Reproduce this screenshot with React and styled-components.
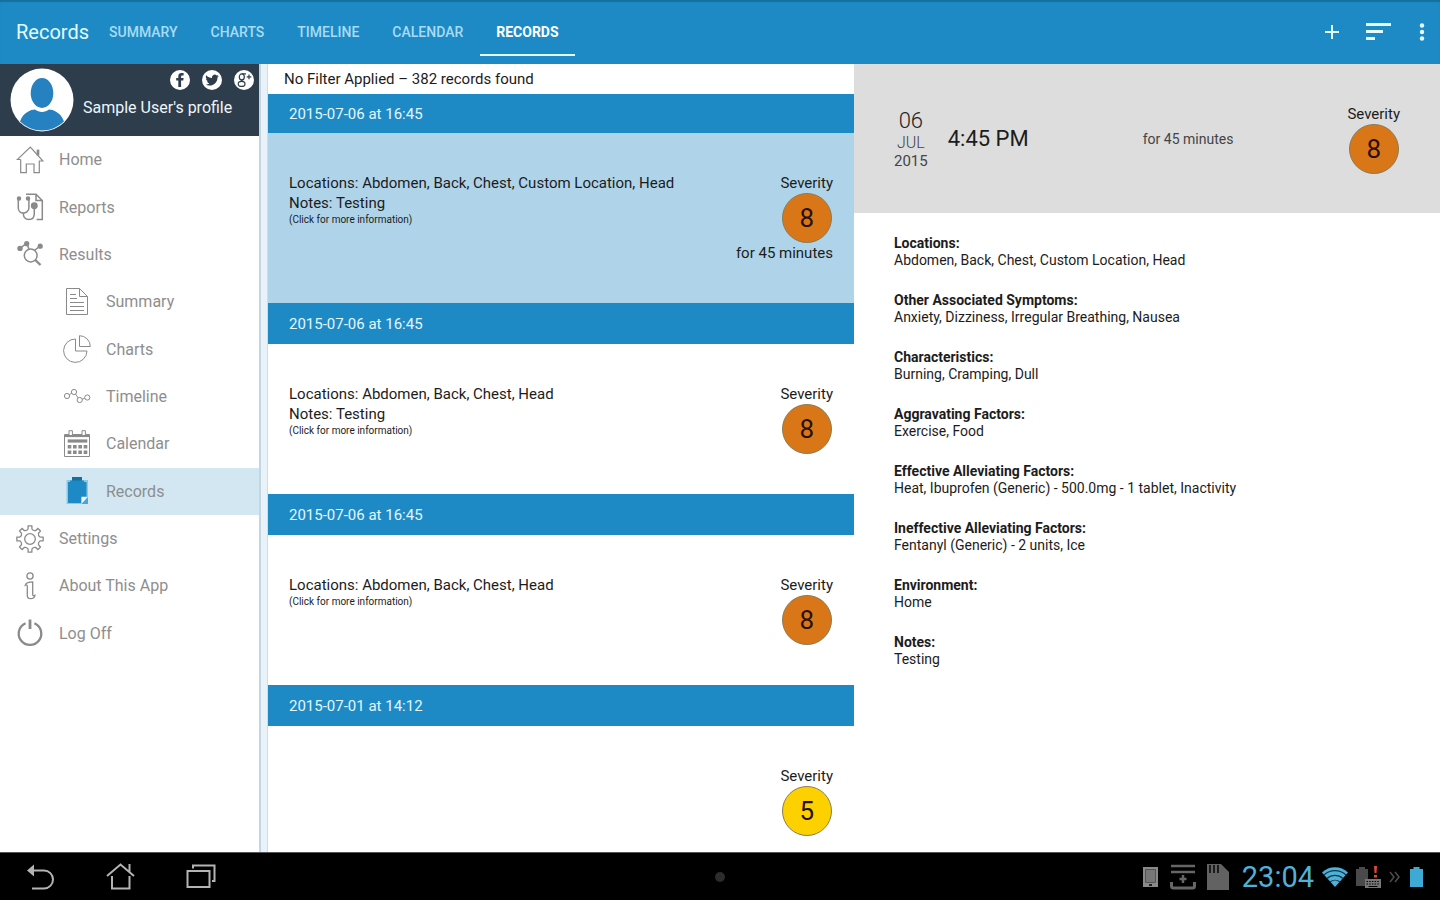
import React from "react";
import styled, { createGlobalStyle } from "styled-components";

const GlobalStyle = createGlobalStyle`
  * {
    box-sizing: border-box;
  }
  body {
    margin: 0;
    background: #fff;
    color: #1c1c1c;
    font-family: Roboto, "Liberation Sans", sans-serif;
    font-size: 15px;
  }
  button {
    margin: 0;
    padding: 0;
    border: 0;
    background: none;
    color: inherit;
    font: inherit;
    cursor: pointer;
  }
  a {
    color: inherit;
    text-decoration: none;
  }
  svg {
    display: block;
    flex: none;
  }
`;

const Screen = styled.div`
  display: grid;
  grid-template-rows: 64px minmax(0, 1fr) 48px;
  height: 100vh;
`;

/* Top bar */

const TopBar = styled.header`
  display: flex;
  align-items: center;
  padding: 0 15px 0 16px;
  background: #1e8ac5;
  box-shadow: inset 0 2px 1px #16709f;
  color: #e4fbff;
`;

const AppTitle = styled.h1`
  margin: 0;
  width: 77px;
  font-size: 20px;
  font-weight: 400;
`;

const Tabs = styled.nav`
  display: flex;
  flex: 1;
  gap: 1px;
`;

const Tab = styled.a`
  padding: 0 16px;
  height: 48px;
  line-height: 48px;
  font-size: 14px;
  font-weight: ${(p) => (p.$active ? 700 : 500)};
  color: ${(p) => (p.$active ? "#fff" : "#a9dcf3")};
  border-bottom: 2px solid ${(p) => (p.$active ? "#e4fbff" : "transparent")};
`;

const Actions = styled.div`
  display: flex;
  align-items: center;
  gap: 27px;
`;

/* Columns */

const Columns = styled.div`
  display: grid;
  grid-template-columns: 259px 9px minmax(0, 1fr) minmax(0, 1fr);
`;

const Sidebar = styled.aside`
  min-height: 0;
  overflow: hidden;
`;

const Divider = styled.div`
  background: #e9f2f8;
  border-left: 2px solid #c3d7e3;
  border-right: 1px solid #cfdde6;
`;

const Profile = styled.div`
  display: flex;
  gap: 9px;
  height: 72px;
  padding: 4px 5px 4px 10px;
  background: #2d3d4c;
  color: #eef5f8;
`;

const ProfileBody = styled.div`
  flex: 1;
  padding-top: 2px;
`;

const Social = styled.div`
  display: flex;
  justify-content: flex-end;
  gap: 12px;
`;

const ProfileName = styled.div`
  padding-top: 7px;
  font-size: 16px;
  line-height: 22px;
  white-space: nowrap;
`;

const Menu = styled.nav`
  display: flex;
  flex-direction: column;
  height: 521px;
`;

const MenuItem = styled.a`
  display: flex;
  flex: 1;
  align-items: center;
  gap: 15px;
  padding-left: ${(p) => (p.$nested ? "63px" : "16px")};
  background: ${(p) => (p.$active ? "#d2e7f2" : "transparent")};
  color: #8e8e8e;
  font-size: 16px;
`;

/* Record list */

const List = styled.main`
  min-height: 0;
  overflow: hidden;
`;

const FilterInfo = styled.div`
  height: 30px;
  padding-left: 16px;
  line-height: 30px;
`;

const RecordItem = styled.article`
  &:first-of-type > h2 {
    height: 39px;
    line-height: 40px;
  }
`;

const RecordDate = styled.h2`
  margin: 0;
  height: 41px;
  padding-left: 21px;
  line-height: 43px;
  background: #1e8ac5;
  color: #e4f6ff;
  font-size: 15px;
  font-weight: 400;
`;

const RecordBody = styled.div`
  display: flex;
  justify-content: space-between;
  padding: 40px 21px;
  background: ${(p) => (p.$selected ? "#afd4e9" : "#fff")};
  line-height: 20px;
`;

const Hint = styled.div`
  font-size: 10px;
  line-height: 13px;
`;

const RecordSide = styled.div`
  display: flex;
  flex-direction: column;
  align-items: flex-end;
`;

const SeverityBox = styled.div`
  display: flex;
  flex-direction: column;
  align-items: center;
  line-height: 20px;
`;

const Score = styled.div`
  width: 50px;
  height: 50px;
  border: 1px solid #8a7b57;
  border-radius: 50%;
  background: ${(p) => (p.$level > 6 ? "#d97718" : "#fdd000")};
  color: #2a0f06;
  font-size: 26px;
  line-height: 49px;
  text-align: center;
`;

/* Record detail */

const Detail = styled.section`
  min-height: 0;
  overflow: hidden;
`;

const DetailHead = styled.div`
  display: flex;
  align-items: center;
  height: 149px;
  padding: 0 40px;
  background: #dddddd;
`;

const DateBlock = styled.div`
  margin-right: 20px;
  color: #444;
  font-size: 15px;
  line-height: 18px;
  text-align: center;
`;

const Day = styled.div`
  color: #222;
  font-size: 22px;
  font-weight: 300;
  line-height: 26px;
`;

const Month = styled.div`
  font-size: 16px;
  font-weight: 300;
`;

const Time = styled.div`
  font-size: 22px;
`;

const Duration = styled.div`
  margin: 0 auto;
  color: #444;
  font-size: 14px;
`;

const Fields = styled.dl`
  display: flex;
  flex-direction: column;
  gap: 23px;
  margin: 0;
  padding: 22px 40px;
  font-size: 14px;
  line-height: 17px;

  dt {
    font-weight: 700;
  }
  dd {
    margin: 0;
  }
`;

/* System bar */

const SystemBar = styled.footer`
  display: grid;
  grid-template-columns: 1fr auto 1fr;
  align-items: center;
  padding: 0 16px;
  background: #000;
  border-top: 1px solid #555;
`;

const SystemKeys = styled.div`
  display: flex;
  gap: 50px;
  padding-left: 10px;
`;

const Dot = styled.div`
  width: 10px;
  height: 10px;
  border-radius: 50%;
  background: #2c2c2c;
`;

const Status = styled.div`
  display: flex;
  align-items: center;
  justify-content: flex-end;
  gap: 8px;
`;

const StatusIcons = styled.div`
  display: flex;
  align-items: center;
  gap: 10px;
  margin-right: 4px;
`;

const Clock = styled.time`
  color: #4fb0d8;
  font-size: 29px;
  line-height: 48px;
`;

/* Icons */

const MenuIcon = ({ children, width = 1.2 }) => (
  <svg
    width="28"
    height="28"
    viewBox="0 0 28 28"
    fill="none"
    stroke="#8a8a8a"
    strokeWidth={width}
    aria-hidden="true"
  >
    {children}
  </svg>
);

const polar = (r, deg) => {
  const a = (deg * Math.PI) / 180;
  return `${(14 + r * Math.cos(a)).toFixed(2)} ${(14 + r * Math.sin(a)).toFixed(2)}`;
};

// eight teeth with rounded valleys between them
const gearPath =
  [0, 45, 90, 135, 180, 225, 270, 315]
    .map(
      (a, i) =>
        `${i ? "L" : "M"}${polar(10.2, a - 11)} L${polar(13.2, a - 8)} A13.2 13.2 0 0 1 ${polar(13.2, a + 8)} L${polar(10.2, a + 11)} Q${polar(8.6, a + 22.5)} ${polar(10.2, a + 34)}`
    )
    .join(" ") + "Z";

const icons = {
  home: (
    <MenuIcon>
      <path d="M4.7 13.5H1.3L14.3 1 27 15H23.3V26.7H18V18H10.3V26.7H4.7V13.5" />
      <path d="M22 9.5V3.6" strokeWidth="2.6" />
    </MenuIcon>
  ),
  reports: (
    <MenuIcon width={1.5}>
      <path d="M10 1.2H20l6.3 6.3v19H20.6M20 1.2v6.3h6.3" />
      <path d="M2.3 6v9c0 3 2.3 5 5 5s5.6-2 5.6-5V6" />
      <path d="M7.3 20c0 4.5 2.5 6.5 5.5 6.5s5.5-2 5.5-6v-6" />
      <circle cx="18.3" cy="12.8" r="2.7" fill="#8a8a8a" />
      <circle cx="3" cy="5.6" r="1.5" fill="#8a8a8a" />
      <circle cx="12" cy="5.6" r="1.5" fill="#8a8a8a" />
    </MenuIcon>
  ),
  results: (
    <MenuIcon width={1.5}>
      <circle cx="14.7" cy="15.5" r="6.4" />
      <path d="M4 8.2l6.7-4.7 2.4 5.8M24 6.2l-5.6 4.3" />
      <path d="M19.3 20l5.2 5" strokeWidth="2.4" />
      <g fill="#8a8a8a" stroke="none">
        <circle cx="4" cy="8.4" r="2.7" />
        <circle cx="10.7" cy="3.7" r="2.6" />
        <circle cx="24.2" cy="6.2" r="2.6" />
      </g>
    </MenuIcon>
  ),
  summary: (
    <MenuIcon width={1}>
      <path d="M3.5 .5H16.5L24.5 8.5V26.5H3.5ZM16.5 .5v8h8" />
      <path d="M7 6.5h6M7 10.5h7M7 14.5h14M7 18.5h14M7 22.5h14" />
    </MenuIcon>
  ),
  charts: (
    <MenuIcon width={1}>
      <path d="M12.5 4A11.7 11.7 0 1 0 24 16H12.5Z" />
      <path d="M16.5 .7V11.5H27.3A10.8 10.8 0 0 0 16.5 .7Z" />
    </MenuIcon>
  ),
  timeline: (
    <MenuIcon width={1}>
      <circle cx="4" cy="14" r="2.6" />
      <circle cx="11" cy="10" r="2.6" />
      <circle cx="16.7" cy="18" r="2.6" />
      <circle cx="24.3" cy="15.5" r="2.6" />
      <path d="M6.3 12.7l2.4-1.4M12.5 12.1l2.7 3.8M19.2 17.1l2.6-.8" />
    </MenuIcon>
  ),
  calendar: (
    <MenuIcon width={1}>
      <path d="M1.5 4.5h25v22h-25Z" />
      <path d="M2 5.8H26" strokeWidth="2.6" />
      <path d="M6 5V.7h3.4V5M19 5V.7h3.4V5" fill="#fff" />
      <path d="M4.7 11H24.3" strokeWidth="3.2" />
      <path d="M4.7 16.7H24.3M4.7 22.2H24.3" strokeWidth="3.4" strokeDasharray="3.6 1.73" />
    </MenuIcon>
  ),
  records: (
    <MenuIcon>
      <g stroke="none">
        <path d="M3.5 3h21.5v24H3.5Z" fill="#8fc6e2" />
        <path d="M5 5h18.5v14.5h-5V26H5Z" fill="#1e8ac5" />
        <path d="M9 0h10v5.2H9Z" fill="#176f9f" />
        <path d="M7 3.5h14v2.8H7Z" fill="#1e8ac5" />
        <path d="M18.5 20H25L18.5 27Z" fill="#e6f5fb" />
        <path d="M25 20v7h-6.5Z" fill="#4ba4d2" />
      </g>
    </MenuIcon>
  ),
  settings: (
    <MenuIcon width={1.3}>
      <path d={gearPath} />
      <circle cx="14" cy="14" r="5.3" />
    </MenuIcon>
  ),
  about: (
    <MenuIcon width={1.3}>
      <circle cx="14" cy="4" r="3.1" />
      <path d="M9.3 13.2C10 10.8 12 9.9 16.7 9.9V22.5c0 1.6 1 1.6 2.2.8-.2 2-2 3.4-4.2 3.4-2.4 0-3.4-1.2-3.4-3.2v-9c0-1.6-.9-1.9-2-1.3Z" />
    </MenuIcon>
  ),
  logoff: (
    <MenuIcon width={2.3}>
      <path d="M9.6 4.2A11.3 11.3 0 1 0 18.4 4.2" />
      <path d="M14 .5V10" strokeWidth="2.8" />
    </MenuIcon>
  ),
};

const Avatar = () => (
  <svg width="64" height="64" viewBox="0 0 64 64" role="img" aria-label="Avatar">
    <circle cx="32" cy="32" r="31.5" fill="#fff" />
    <ellipse cx="32" cy="25" rx="11.3" ry="15" fill="#2581bf" />
    <path d="M10 53.5C13 44.5 21 41.5 25 41.5c4 3.3 10 3.3 14 0 4 0 12 3 15 12A31.5 31.5 0 0 1 10 53.5Z" fill="#2581bf" />
  </svg>
);

const Facebook = () => (
  <svg width="20" height="20" viewBox="0 0 20 20" aria-hidden="true">
    <circle cx="10" cy="10" r="10" fill="#fff" />
    <path d="M8.3 17V10.6H6.2V8h2.1V6.2C8.3 4 9.6 2.9 11.6 2.9h2v2.5h-1.4c-.9 0-1.1.4-1.1 1.1V8h2.5l-.3 2.6h-2.2V17Z" fill="#2d3d4c" />
  </svg>
);

const Twitter = () => (
  <svg width="20" height="20" viewBox="0 0 20 20" aria-hidden="true">
    <circle cx="10" cy="10" r="10" fill="#fff" />
    <g transform="translate(3.4 3.4) scale(.56)">
      <path
        d="M23.95 4.57a10 10 0 0 1-2.82.77 4.96 4.96 0 0 0 2.16-2.72c-.95.55-2 .95-3.13 1.18a4.92 4.92 0 0 0-8.38 4.48C7.69 8.1 4.07 6.13 1.64 3.16a4.82 4.82 0 0 0 1.52 6.57 4.9 4.9 0 0 1-2.23-.61v.06a4.92 4.92 0 0 0 3.95 4.83 5 5 0 0 1-2.21.08 4.94 4.94 0 0 0 4.6 3.42A9.87 9.87 0 0 1 0 19.54a13.99 13.99 0 0 0 7.56 2.21c9.05 0 14-7.5 14-13.98 0-.21 0-.42-.02-.63a9.94 9.94 0 0 0 2.41-2.57Z"
        fill="#2d3d4c"
      />
    </g>
  </svg>
);

const GooglePlus = () => (
  <svg width="20" height="20" viewBox="0 0 20 20" aria-hidden="true">
    <circle cx="10" cy="10" r="10" fill="#fff" />
    <g fill="none" stroke="#2d3d4c" strokeWidth="1.2">
      <ellipse cx="7.8" cy="6.9" rx="2.5" ry="3" />
      <ellipse cx="7.6" cy="13.9" rx="3.4" ry="2.5" />
      <path d="M8 3.8h4M8.6 9.6c-1.6.6-1 1.2 0 2M15 4.6v4.6M12.7 6.9h4.6" />
    </g>
  </svg>
);

const profiles = [
  ["Facebook", <Facebook />],
  ["Twitter", <Twitter />],
  ["Google Plus", <GooglePlus />],
];

const tabs = ["SUMMARY", "CHARTS", "TIMELINE", "CALENDAR", "RECORDS"];

const menu = [
  { icon: "home", label: "Home" },
  { icon: "reports", label: "Reports" },
  { icon: "results", label: "Results" },
  { icon: "summary", label: "Summary", nested: true },
  { icon: "charts", label: "Charts", nested: true },
  { icon: "timeline", label: "Timeline", nested: true },
  { icon: "calendar", label: "Calendar", nested: true },
  { icon: "records", label: "Records", nested: true, active: true },
  { icon: "settings", label: "Settings" },
  { icon: "about", label: "About This App" },
  { icon: "logoff", label: "Log Off" },
];

const records = [
  {
    date: "2015-07-06 at 16:45",
    locations: "Abdomen, Back, Chest, Custom Location, Head",
    notes: "Testing",
    severity: 8,
    duration: "for 45 minutes",
    selected: true,
  },
  {
    date: "2015-07-06 at 16:45",
    locations: "Abdomen, Back, Chest, Head",
    notes: "Testing",
    severity: 8,
  },
  {
    date: "2015-07-06 at 16:45",
    locations: "Abdomen, Back, Chest, Head",
    severity: 8,
  },
  { date: "2015-07-01 at 14:12", severity: 5 },
];

const fields = [
  ["Locations:", "Abdomen, Back, Chest, Custom Location, Head"],
  ["Other Associated Symptoms:", "Anxiety, Dizziness, Irregular Breathing, Nausea"],
  ["Characteristics:", "Burning, Cramping, Dull"],
  ["Aggravating Factors:", "Exercise, Food"],
  [
    "Effective Alleviating Factors:",
    "Heat, Ibuprofen (Generic) - 500.0mg - 1 tablet, Inactivity",
  ],
  ["Ineffective Alleviating Factors:", "Fentanyl (Generic) - 2 units, Ice"],
  ["Environment:", "Home"],
  ["Notes:", "Testing"],
];

const Severity = ({ value }) => (
  <SeverityBox>
    Severity
    <Score $level={value}>{value}</Score>
  </SeverityBox>
);

const Header = () => (
  <TopBar>
    <AppTitle>Records</AppTitle>
    <Tabs>
      {tabs.map((tab) => (
        <Tab key={tab} href="#" $active={tab === "RECORDS"}>
          {tab}
        </Tab>
      ))}
    </Tabs>
    <Actions>
      <button type="button" aria-label="Add">
        <svg width="14" height="14" viewBox="0 0 14 14" stroke="#e4fbff" strokeWidth="2">
          <path d="M7 0v14M0 7h14" />
        </svg>
      </button>
      <button type="button" aria-label="Filter">
        <svg width="26" height="18" viewBox="0 0 26 18" stroke="#e4fbff" strokeWidth="3">
          <path d="M0 1.5h25M0 8.5h17M0 15.5h9" />
        </svg>
      </button>
      <button type="button" aria-label="More">
        <svg width="6" height="18" viewBox="0 0 6 18" fill="#e4fbff">
          <circle cx="3" cy="2.5" r="2.2" />
          <circle cx="3" cy="9" r="2.2" />
          <circle cx="3" cy="15.5" r="2.2" />
        </svg>
      </button>
    </Actions>
  </TopBar>
);

const Navigation = () => (
  <Sidebar>
    <Profile>
      <Avatar />
      <ProfileBody>
        <Social>
          {profiles.map(([name, icon]) => (
            <a key={name} href="#" aria-label={name}>
              {icon}
            </a>
          ))}
        </Social>
        <ProfileName>Sample User's profile</ProfileName>
      </ProfileBody>
    </Profile>
    <Menu>
      {menu.map((item) => (
        <MenuItem key={item.label} href="#" $nested={item.nested} $active={item.active}>
          {icons[item.icon]}
          {item.label}
        </MenuItem>
      ))}
    </Menu>
  </Sidebar>
);

const RecordList = () => (
  <List>
    <FilterInfo>No Filter Applied – 382 records found</FilterInfo>
    {records.map((record, i) => (
      <RecordItem key={i}>
        <RecordDate>{record.date}</RecordDate>
        <RecordBody $selected={record.selected}>
          <div>
            {record.locations && (
              <>
                <div>Locations: {record.locations}</div>
                {record.notes && <div>Notes: {record.notes}</div>}
                <Hint>(Click for more information)</Hint>
              </>
            )}
          </div>
          <RecordSide>
            <Severity value={record.severity} />
            {record.duration}
          </RecordSide>
        </RecordBody>
      </RecordItem>
    ))}
  </List>
);

const RecordDetail = () => (
  <Detail>
    <DetailHead>
      <DateBlock>
        <Day>06</Day>
        <Month>JUL</Month>
        2015
      </DateBlock>
      <Time>4:45 PM</Time>
      <Duration>for 45 minutes</Duration>
      <Severity value={8} />
    </DetailHead>
    <Fields>
      {fields.map(([label, value]) => (
        <div key={label}>
          <dt>{label}</dt>
          <dd>{value}</dd>
        </div>
      ))}
    </Fields>
  </Detail>
);

const AndroidBar = () => (
  <SystemBar>
    <SystemKeys>
      <button type="button" aria-label="Back">
        <svg width="30" height="28" viewBox="0 0 30 28" fill="none" stroke="#b4b4b4" strokeWidth="2">
          <path d="M6 7.5H18a9 9 0 0 1 0 18H6" />
          <path d="M8 1.5v12L1 7.5Z" fill="#b4b4b4" stroke="none" />
        </svg>
      </button>
      <button type="button" aria-label="Home">
        <svg width="30" height="28" viewBox="0 0 30 28" fill="none" stroke="#b4b4b4" strokeWidth="2">
          <path d="M1 13L14.5 1.5 28 13M23.5 9V1M6 13V25.5H23.5V13" />
        </svg>
      </button>
      <button type="button" aria-label="Recent apps">
        <svg width="30" height="28" viewBox="0 0 30 28" fill="none" stroke="#b4b4b4" strokeWidth="2">
          <path d="M1.5 8H23.5V24H1.5Z" />
          <path d="M7 5.5V2.5H28.5V18H26" />
        </svg>
      </button>
    </SystemKeys>
    <Dot />
    <Status>
      <StatusIcons>
        <svg width="18" height="22" viewBox="0 0 18 22">
          <path d="M1 1h15v20H1Z" fill="#8a8a8a" />
          <path d="M3.5 3.5h10v13h-10Z" fill="#777" stroke="#555" />
          <path d="M7 18h3v2H7Z" fill="#222" />
        </svg>
        <svg width="26" height="26" viewBox="0 0 26 26" fill="none" stroke="#666" strokeWidth="2.5">
          <path d="M1 2h24M1 8h24" />
          <path d="M1.5 18v4q0 2 2 2h19q2 0 2-2v-4" strokeWidth="3" />
          <path d="M13 11v8M9.5 15h7" />
        </svg>
        <svg width="24" height="28" viewBox="0 0 24 28">
          <path d="M1 1h14l8 8v18H1Z" fill="#626262" />
          <path d="M4 2v8M8 2v8M12 2v8" stroke="#1c1c1c" strokeWidth="2" />
        </svg>
      </StatusIcons>
      <Clock dateTime="23:04">23:04</Clock>
      <svg width="26" height="20" viewBox="0 0 26 20" fill="none" stroke="#4fb0d8">
        <path d="M13 20L0 5.5A19 19 0 0 1 26 5.5Z" fill="#4fb0d8" stroke="none" />
        <path d="M2 8a16 16 0 0 1 22 0M5 11.5a12 12 0 0 1 16 0M8 15a8 8 0 0 1 10 0" stroke="#12384a" strokeWidth="1.2" />
      </svg>
      <svg width="25" height="23" viewBox="0 0 25 23">
        <path d="M0 3h3V1h6v2h3v17H0Z" fill="#4a4a4a" />
        <path d="M9 13h16v9H9Z" fill="#777" />
        <path d="M10.5 15.5h13M10.5 18h13" stroke="#000" strokeDasharray="1.5 1.2" />
        <path d="M12.5 20.5h9" stroke="#000" />
        <path d="M18 0h3l-.5 7h-2ZM18 9h3v2.5h-3Z" fill="#e0492f" />
      </svg>
      <svg width="12" height="12" viewBox="0 0 12 12" fill="none" stroke="#4d4d4d" strokeWidth="1.5">
        <path d="M1 1l4 5-4 5M6 1l4 5-4 5" />
      </svg>
      <svg width="15" height="22" viewBox="0 0 15 22">
        <path d="M1 3h3.500V1h6v2H14v18H1Z" fill="#3fa9d6" />
      </svg>
    </Status>
  </SystemBar>
);

const App = () => (
  <>
    <GlobalStyle />
    <Screen>
      <Header />
      <Columns>
        <Navigation />
        <Divider />
        <RecordList />
        <RecordDetail />
      </Columns>
      <AndroidBar />
    </Screen>
  </>
);

export default App;
